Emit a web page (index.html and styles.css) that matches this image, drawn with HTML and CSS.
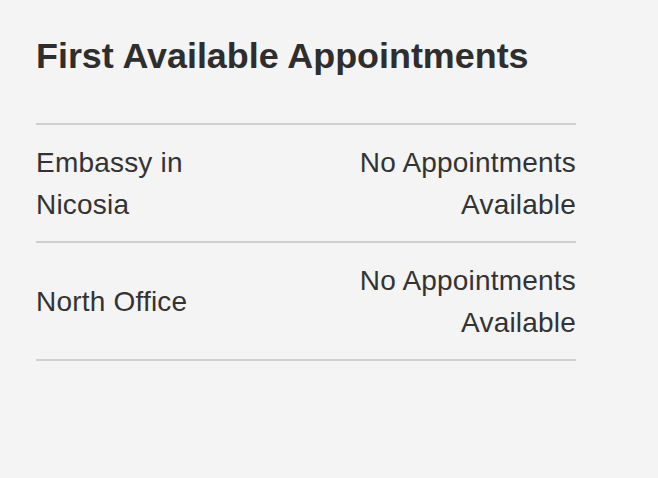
FILE: index.html
```html
<!DOCTYPE html>
<html lang="en">
<head>
<meta charset="utf-8">
<title>First Available Appointments</title>
<link rel="stylesheet" href="styles.css">
</head>
<body>
<section class="panel">
  <h1 class="panel-title">First Available Appointments</h1>
  <div class="appt-list">
    <div class="appt-row">
      <div class="appt-location">Embassy in Nicosia</div>
      <div class="appt-status">No Appointments Available</div>
    </div>
    <div class="appt-row">
      <div class="appt-location">North Office</div>
      <div class="appt-status">No Appointments Available</div>
    </div>
  </div>
</section>
</body>
</html>
```

FILE: styles.css
```css
html, body {
  margin: 0;
  padding: 0;
  background: #f4f4f4;
}

body {
  font-family: "Liberation Sans", Arial, Helvetica, sans-serif;
  color: #333333;
}

.panel {
  width: 540px;
  padding: 35px 36px;
}

.panel-title {
  margin: 0 0 45px 0;
  font-size: 35.9px;
  line-height: 1.2;
  font-weight: 700;
  color: #2e2e2e;
}

.appt-list {
  border-bottom: 2px solid #cfcfcf;
}

.appt-row {
  display: grid;
  grid-template-columns: 2fr 3fr;
  align-items: center;
  padding: 17px 0 15px;
  border-top: 2px solid #cfcfcf;
  font-size: 28px;
  line-height: 42px;
  letter-spacing: 0.2px;
}

.appt-location {
  text-align: left;
}

.appt-status {
  text-align: right;
}
```
